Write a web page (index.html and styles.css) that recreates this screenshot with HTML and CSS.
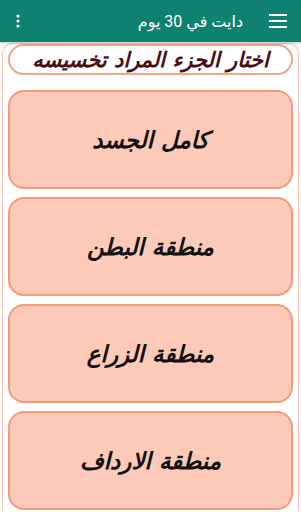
FILE: index.html
```html
<!DOCTYPE html>
<html lang="ar">
<head>
  <meta charset="UTF-8" />
  <meta name="viewport" content="width=device-width, initial-scale=1.0" />
  <title>دايت في 30 يوم</title>
  <link rel="stylesheet" href="styles.css">
</head>
<body>
  <header class="toolbar">
    <button class="menu" aria-label="menu">
      <svg width="18" height="14" viewBox="0 0 18 14"><path d="M0 1h18M0 7h18M0 13h18" stroke="#fff" stroke-width="2"/></svg>
    </button>
    <h1>دايت في 30 يوم</h1>
    <span class="spacer"></span>
    <button class="more" aria-label="more">
      <svg width="4" height="14" viewBox="0 0 4 14"><circle cx="2" cy="2" r="1.6" fill="#fff"/><circle cx="2" cy="7" r="1.6" fill="#fff"/><circle cx="2" cy="12" r="1.6" fill="#fff"/></svg>
    </button>
  </header>

  <main class="frame">
    <div class="heading">اختار الجزء المراد تخسيسه</div>
    <div class="list">
      <button class="part">كامل الجسد</button>
      <button class="part">منطقة البطن</button>
      <button class="part">منطقة الزراع</button>
      <button class="part">منطقة الارداف</button>
    </div>
  </main>
</body>
</html>
```

FILE: styles.css
```css
body {
  margin: 0;
  background: white;
  font-family: "DejaVu Sans", sans-serif;
  direction: rtl;
  height: 512px;
  overflow: hidden;
}
.toolbar {
  height: 42px;
  background: #0e8170;
  display: flex;
  align-items: center;
  padding: 0 14px 0 14px;
  box-shadow: 0 1px 3px rgba(0, 0, 0, 0.25);
  position: relative;
}
.toolbar h1 {
  margin: 0 26px 0 0;
  color: white;
  font-family: "Roboto", "DejaVu Sans", sans-serif;
  font-size: 16px;
  font-weight: normal;
}
.spacer {
  flex: 1;
}
.menu, .more {
  background: none;
  border: none;
  padding: 0;
  display: flex;
}
.more {
  margin-left: 2px;
}
.frame {
  margin: 1px 2px 0 2px;
  border: 1.5px solid #f8c6b6;
  border-bottom: none;
  border-radius: 10px 10px 0 0;
  padding: 0 5px 0 5px;
}
.heading {
  height: 27px;
  border: 2px solid #f0a48a;
  border-radius: 16px;
  display: flex;
  align-items: center;
  justify-content: center;
  color: #4a0d12;
  font-size: 21px;
  font-weight: bold;
  font-style: italic;
}
.list {
  display: flex;
  flex-direction: column;
  gap: 8px;
  margin-top: 15px;
}
.part {
  height: 99px;
  background: #fdcab9;
  border: 2px solid #f49a78;
  border-radius: 16px;
  font-family: "DejaVu Sans", sans-serif;
  font-size: 23px;
  font-weight: bold;
  font-style: italic;
  color: #111;
  cursor: pointer;
}
```
